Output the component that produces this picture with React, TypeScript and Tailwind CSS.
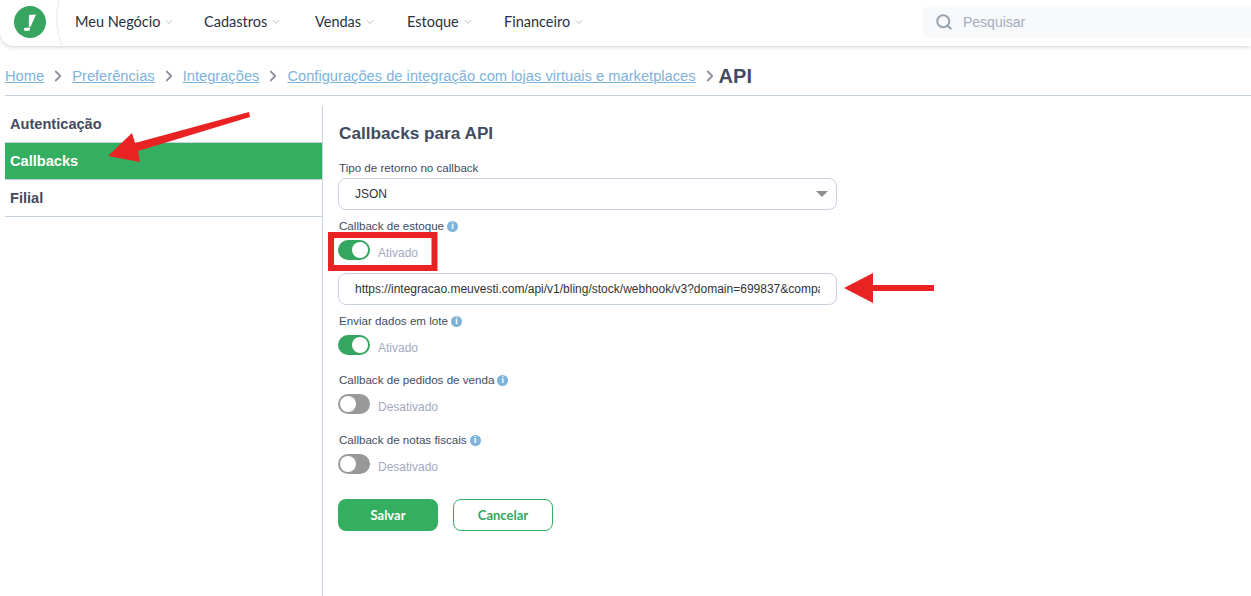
import { ChevronDown, ChevronRight, Search } from "lucide-react";

const NAV_ITEMS = [
  { label: "Meu Negócio", className: "w-[129px]" },
  { label: "Cadastros", className: "w-[111px]" },
  { label: "Vendas", className: "w-[92px]" },
  { label: "Estoque", className: "w-[97px]" },
  { label: "Financeiro", className: "" },
];

const CRUMBS = [
  "Home",
  "Preferências",
  "Integrações",
  "Configurações de integração com lojas virtuais e marketplaces",
];

function Header() {
  return (
    <header className="relative flex h-[46px] items-center rounded-bl-[14px] pb-[2px] shadow-[0_1px_4px_rgba(60,70,90,0.25)]">
      <div className="flex h-full w-[60px] shrink-0 items-center pl-[14px]">
        <svg width="32" height="32" viewBox="0 0 32 32">
          <circle cx="16" cy="16" r="16" fill="#37a55f" />
          <path d="M15 9 L22 8.6 L16.6 20.8 L14.8 20.8 Z" fill="#fff" />
          <path d="M10 22 L16.2 21.4 L15.6 24.6 L10.6 25 Z" fill="#fff" />
        </svg>
      </div>
      <svg className="absolute left-[52px] top-0" width="14" height="46" viewBox="0 0 14 46">
        <path d="M7 0 Q1 24 10 46" fill="none" stroke="#e6e9f0" />
      </svg>
      <div className="flex h-full flex-1 items-center pl-[15px] font-['Lato',sans-serif] text-[14.5px] text-[#283042]">
        {NAV_ITEMS.map((item) => (
          <span key={item.label} className={`flex items-center gap-[3px] ${item.className}`}>
            {item.label}
            <ChevronDown className="size-3 text-[#a3abb9]" strokeWidth={1.5} />
          </span>
        ))}
      </div>
      <div className="flex h-[32px] w-[329px] shrink-0 items-center gap-[10px] rounded-l-[8px] bg-[#f8f9fb] pl-[13px] font-['Liberation_Sans',sans-serif] text-[14px] text-[#a3adbd]">
        <Search className="size-[18px] text-[#97a2b2]" strokeWidth={2.6} />
        Pesquisar
      </div>
    </header>
  );
}

function Breadcrumb() {
  return (
    <nav className="ml-[5px] flex h-[50px] items-center border-b border-[#c9d3e0] pt-[11px] font-['Liberation_Sans',sans-serif] text-[14.7px]">
      {CRUMBS.map((crumb) => (
        <span key={crumb} className="flex items-center">
          <a className="text-[#7eb3db] underline">{crumb}</a>
          <ChevronRight className="mx-[5px] size-[18px] text-[#8f939a]" strokeWidth={2.4} />
        </span>
      ))}
      <span className="-ml-[5px] text-[20px] font-bold text-[#414c5f]">API</span>
    </nav>
  );
}

function Sidebar() {
  return (
    <aside className="ml-[5px] w-[318px] shrink-0 border-r border-[#c9d3e0] pt-[1px] font-['Liberation_Sans',sans-serif] text-[14.6px] font-bold text-[#414c5f]">
      <div className="flex h-[36px] items-center border-b border-[#c9d3e0] pl-[5px]">Autenticação</div>
      <div className="flex h-[37px] items-center border-b border-[#c9d3e0] bg-[#34ae60] pl-[5px] pt-[1px] text-[#fff]">Callbacks</div>
      <div className="flex h-[37px] items-center border-b border-[#c9d3e0] pl-[5px] pt-[1px]">Filial</div>
    </aside>
  );
}

function FieldLabel({ text, info }: { text: string; info?: boolean }) {
  return (
    <div className="flex h-[16px] items-center gap-[3px] pl-[1px] text-[11.6px] text-[#414c5f]">
      {text}
      {info && (
        <span className="flex size-[11px] items-center justify-center rounded-full bg-[#7eb3db] text-[9px] font-bold leading-none text-white">
          i
        </span>
      )}
    </div>
  );
}

function Toggle({ on }: { on: boolean }) {
  return (
    <div className="flex h-[20px] gap-[8px]">
      <div
        className={`flex h-[20px] w-[32px] items-center rounded-full px-[2px] ${
          on ? "justify-end bg-[#34a660]" : "justify-start bg-[#999999]"
        }`}
      >
        <div className="size-[16px] rounded-full bg-white" />
      </div>
      <span className="pt-[5px] text-[12px] leading-[16px] text-[#a3a9bf]">{on ? "Ativado" : "Desativado"}</span>
    </div>
  );
}

function Form() {
  return (
    <main className="ml-[15px] flex-1 pt-[17px] font-['Liberation_Sans',sans-serif]">
      <h2 className="pl-[1px] text-[17.2px] font-bold leading-[20px] text-[#414c5f]">Callbacks para API</h2>

      <div className="mt-[17px]">
        <FieldLabel text="Tipo de retorno no callback" />
      </div>
      <div className="mt-[2px] flex h-[32px] w-[499px] items-center justify-between rounded-[8px] border border-[#c9d3e0] pl-[16px] pr-[6px] text-[12px] text-[#333]">
        JSON
        <svg width="14" height="8" viewBox="0 0 14 8" className="mr-[1px]">
          <path d="M1 1 H13 L7 7 Z" fill="#8f8f8f" />
        </svg>
      </div>

      <div className="mt-[8px]">
        <FieldLabel text="Callback de estoque" info />
      </div>
      <div className="mt-[6px]">
        <Toggle on />
      </div>
      <input
        readOnly
        value="https://integracao.meuvesti.com/api/v1/bling/stock/webhook/v3?domain=699837&company=1234567"
        className="mt-[13px] block h-[32px] w-[499px] rounded-[8px] border border-[#c9d3e0] px-[16px] text-[12px] text-[#333]"
      />

      <div className="mt-[8px]">
        <FieldLabel text="Enviar dados em lote" info />
      </div>
      <div className="mt-[6px]">
        <Toggle on />
      </div>

      <div className="mt-[17px]">
        <FieldLabel text="Callback de pedidos de venda" info />
      </div>
      <div className="mt-[6px]">
        <Toggle on={false} />
      </div>

      <div className="mt-[18px]">
        <FieldLabel text="Callback de notas fiscais" info />
      </div>
      <div className="mt-[6px]">
        <Toggle on={false} />
      </div>

      <div className="mt-[25px] flex gap-[15px] font-['Lato',sans-serif] text-[13px] font-bold">
        <button className="h-[32px] w-[100px] rounded-[8px] bg-[#34ae60] pt-[1px] text-white">Salvar</button>
        <button className="h-[32px] w-[100px] rounded-[8px] border border-[#34ae60] pt-[1px] text-[#34a660]">Cancelar</button>
      </div>
    </main>
  );
}

// marcações vermelhas desenhadas por cima da tela
function Annotations() {
  return (
    <svg className="pointer-events-none absolute left-0 top-0" width="1251" height="596" viewBox="0 0 1251 596">
      <path d="M249 112 L250 117 L138 151 L140 162 L108 156 L132 133 L135 143 Z" fill="#e92323" />
      <rect x="331" y="235" width="103.5" height="33" fill="none" stroke="#e92323" strokeWidth="6" />
      <path d="M934 285 L873 285 L873 273 L844 288 L873 303 L873 291 L934 291 Z" fill="#e92323" />
    </svg>
  );
}

export default function App() {
  return (
    <div className="relative h-[596px] w-[1251px] overflow-hidden bg-white">
      <Header />
      <Breadcrumb />
      <div className="mt-[10px] flex h-[490px]">
        <Sidebar />
        <Form />
      </div>
      <Annotations />
    </div>
  );
}
